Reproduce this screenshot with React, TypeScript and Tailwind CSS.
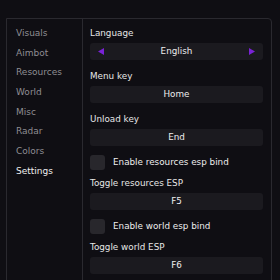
const tabs = ["Visuals", "Aimbot", "Resources", "World", "Misc", "Radar", "Colors", "Settings"];

function Field({ label, value }: { label: string; value: string }) {
  return (
    <div>
      <div className="h-[12px] leading-[14px] text-[#e6e6e6]">{label}</div>
      <div className="mt-[5px] flex h-[17px] items-center justify-center rounded-[3px] bg-[#1b1a1f] text-[#ededed]">
        {value}
      </div>
    </div>
  );
}

function Check({ label }: { label: string }) {
  return (
    <div className="flex h-[15px] items-center">
      <div className="h-[15px] w-[15px] rounded-[3px] bg-[#28272c]" />
      <span className="ml-[8px] text-[#ededed]">{label}</span>
    </div>
  );
}

export default function App() {
  return (
    <div
      className="h-[280px] w-[280px] overflow-hidden bg-[#0f0e13] pl-[6px] pt-[18px] text-[8.8px]"
      style={{ fontFamily: '"DejaVu Sans", sans-serif' }}
    >
      <div className="flex h-[270px] w-[266px] rounded-tr-[4px] border border-[#2a292f]">
        {/* menu */}
        <div className="w-[76px] shrink-0 border-r border-[#2a292f] pl-[9px] pt-[5px] text-[9px]">
          {tabs.map((t) => (
            <div
              key={t}
              className={
                "h-[19.7px] leading-[19.7px] " +
                (t === "Settings" ? "text-[#f0f0f0]" : "text-[#8e8d92]")
              }
            >
              {t}
            </div>
          ))}
        </div>

        {/* settings */}
        <div className="flex-1 pl-[7px] pr-[8px] pt-[7px]">
          <div>
            <div className="h-[12px] leading-[14px] text-[#e6e6e6]">Language</div>
            <div className="mt-[5px] flex h-[17px] items-center justify-between rounded-[3px] bg-[#1b1a1f] px-[8px] text-[#ededed]">
              <svg width="6" height="7" viewBox="0 0 6 7">
                <path d="M0 3.5L6 0V7Z" fill="#7a22d6" />
              </svg>
              <span>English</span>
              <svg width="6" height="7" viewBox="0 0 6 7">
                <path d="M6 3.5L0 0V7Z" fill="#7a22d6" />
              </svg>
            </div>
          </div>
          <div className="mt-[9px]">
            <Field label="Menu key" value="Home" />
          </div>
          <div className="mt-[9px]">
            <Field label="Unload key" value="End" />
          </div>
          <div className="mt-[9px]">
            <Check label="Enable resources esp bind" />
          </div>
          <div className="mt-[6px]">
            <Field label="Toggle resources ESP" value="F5" />
          </div>
          <div className="mt-[9px]">
            <Check label="Enable world esp bind" />
          </div>
          <div className="mt-[6px]">
            <Field label="Toggle world ESP" value="F6" />
          </div>
        </div>
      </div>
    </div>
  );
}
